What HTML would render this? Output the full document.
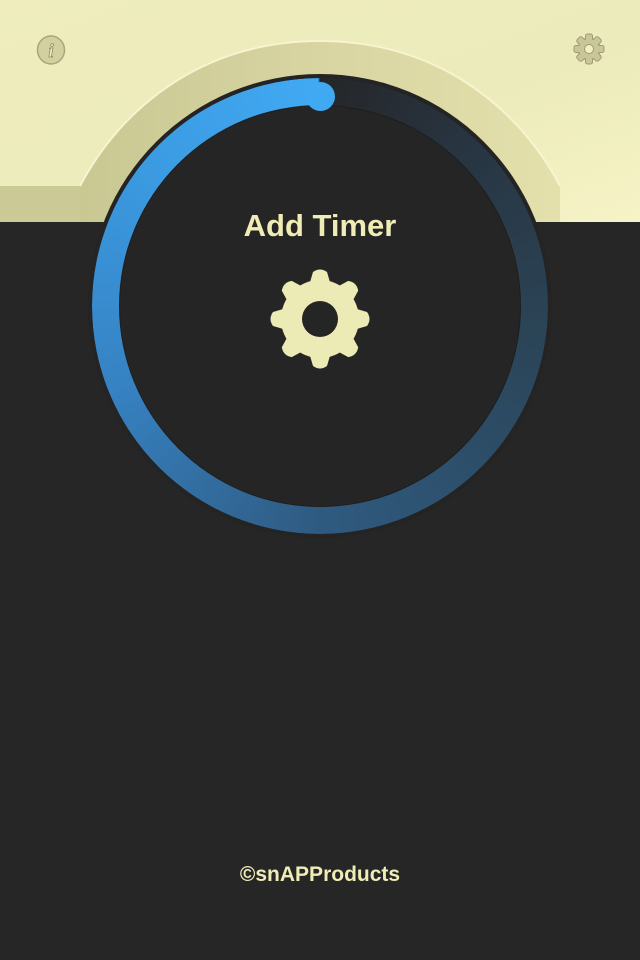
<!DOCTYPE html>
<html><head><meta charset="utf-8"><style>
html,body{margin:0;padding:0}
body{width:640px;height:960px;background:#262626;position:relative;overflow:hidden;font-family:"Liberation Sans",sans-serif}
.top{position:absolute;left:0;top:0;width:640px;height:222px;background:linear-gradient(160deg,#efedbd,#ecebbb 60%,#f6f4c6)}
.lband{position:absolute;left:0;top:186px;width:120px;height:36px;background:#cbc995}
.bottom{position:absolute;left:0;top:222px;width:640px;height:738px;background:#262626}
.dark{position:absolute;left:88px;top:74px;width:464px;height:464px;border-radius:50%;background:#242424}
.ring{position:absolute;left:92px;top:78px;width:456px;height:456px;border-radius:50%;
background:conic-gradient(from 0deg,#252628 0deg,#283440 40deg,#2b4558 100deg,#2f5a80 180deg,#3683c4 250deg,#3b9be2 310deg,#41a9f2 359.5deg,#252628 360deg);
-webkit-mask:radial-gradient(circle,transparent 199px,#000 200px);mask:radial-gradient(circle,transparent 199px,#000 200px)}
.inner{position:absolute;left:120px;top:106px;width:400px;height:400px;border-radius:50%;background:#252525;box-shadow:0 0 0 1px #1e1e1e}
.cap{position:absolute;left:306px;top:82px;width:29px;height:29px;border-radius:50%;background:#41a9f2}
.title{position:absolute;left:0;width:640px;top:208px;text-align:center;color:#f0ecb5;font-size:31px;font-weight:bold}
.copy{position:absolute;left:0;width:640px;top:863px;text-align:center;color:#f0ecb5;font-size:21px;font-weight:bold}
</style></head><body>
<div class="top"></div>
<div class="lband"></div>
<svg style="position:absolute;left:0;top:0" width="640" height="222">
<defs><linearGradient id="ag" x1="0" x2="1" y1="0" y2="0"><stop offset="0" stop-color="#c9c792"/><stop offset="0.5" stop-color="#d8d5a2"/><stop offset="1" stop-color="#e3e0ac"/></linearGradient></defs>
<path d="M80,186 C120,110 200,41 320,41 C440,41 520,110 560,186 L560,222 L80,222 Z" fill="url(#ag)"/>
<path d="M80,186 C120,110 200,41 320,41 C440,41 520,110 560,186" fill="none" stroke="#f7f4cf" stroke-width="2"/>
</svg>
<div class="bottom"></div>
<div class="dark"></div>
<div class="ring"></div>
<div class="inner"></div>
<div class="cap"></div>
<div class="title">Add Timer</div>
<svg style="position:absolute;left:266px;top:265px" width="108" height="108" viewBox="-54 -54 108 108">
<g fill="#ecebb5">
<circle r="39"/>
<g id="t"><path d="M-7,-47 Q0,-52 7,-47 L12,-30 L-12,-30 Z"/></g>
<use href="#t" transform="rotate(45)"/><use href="#t" transform="rotate(90)"/><use href="#t" transform="rotate(135)"/>
<use href="#t" transform="rotate(180)"/><use href="#t" transform="rotate(225)"/><use href="#t" transform="rotate(270)"/><use href="#t" transform="rotate(315)"/>
</g>
<circle r="18" fill="#252525"/>
</svg>
<svg style="position:absolute;left:36px;top:35px" width="30" height="30" viewBox="0 0 30 30">
<ellipse cx="15" cy="15" rx="13.5" ry="14" fill="#d3d0a0" stroke="#a8a57a" stroke-width="1.5"/>
<text x="15" y="22" text-anchor="middle" font-family="Liberation Serif,serif" font-style="italic" font-weight="bold" font-size="19" fill="#f3f0c8" stroke="#8d8a62" stroke-width="0.8">i</text>
</svg>
<svg style="position:absolute;left:573px;top:33px" width="32" height="32" viewBox="-16 -16 32 32">
<g fill="#c9c69a" stroke="#9e9b72" stroke-width="1">
<circle r="11"/>
<g id="t2"><rect x="-3.5" y="-15" width="7" height="7" rx="2"/></g>
<use href="#t2" transform="rotate(45)"/><use href="#t2" transform="rotate(90)"/><use href="#t2" transform="rotate(135)"/>
<use href="#t2" transform="rotate(180)"/><use href="#t2" transform="rotate(225)"/><use href="#t2" transform="rotate(270)"/><use href="#t2" transform="rotate(315)"/>
</g>
<circle r="10" fill="#c9c69a"/>
<circle r="4.5" fill="#f1efc6" stroke="#9e9b72" stroke-width="1"/>
</svg>
<div class="copy">©snAPProducts</div>
</body></html>
